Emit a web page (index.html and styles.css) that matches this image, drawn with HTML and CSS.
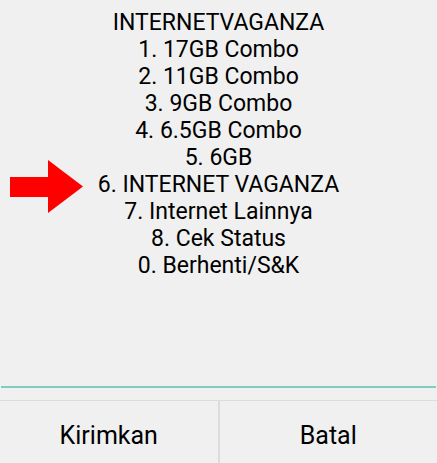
FILE: index.html
```html
<!DOCTYPE html>
<html>
<head>
<meta charset="utf-8">
<link rel="stylesheet" href="styles.css">
</head>
<body>
<div class="dialog">
  <div class="message">
    <div class="line">INTERNETVAGANZA</div>
    <div class="line">1. 17GB Combo</div>
    <div class="line">2. 11GB Combo</div>
    <div class="line">3. 9GB Combo</div>
    <div class="line">4. 6.5GB Combo</div>
    <div class="line">5. 6GB</div>
    <div class="line">6. INTERNET VAGANZA</div>
    <div class="line">7. Internet Lainnya</div>
    <div class="line">8. Cek Status</div>
    <div class="line">0. Berhenti/S&amp;K</div>
    <svg class="arrow" width="74" height="54" viewBox="0 0 74 54"><polygon points="0,17 38,17 38,0 73,26.5 38,53 38,37 0,37" fill="#ff0000"/></svg>
  </div>
  <div class="input-line"></div>
  <div class="buttons">
    <div class="btn">Kirimkan</div>
    <div class="btn">Batal</div>
  </div>
</div>
</body>
</html>
```
FILE: styles.css
```css
html, body {
  margin: 0;
  padding: 0;
  background: #f0f0f0;
}
.dialog {
  width: 437px;
  height: 463px;
  display: flex;
  flex-direction: column;
  font-family: Roboto, "Noto Sans", sans-serif;
  color: #000;
}
.message {
  position: relative;
  flex: 1;
  padding-top: 9px;
  text-align: center;
  font-size: 23px;
  line-height: 27px;
}
.arrow {
  position: absolute;
  left: 10px;
  top: 160px;
}
.input-line {
  height: 2px;
  margin: 0 1px 12px 1px;
  background: #80cbc4;
}
.buttons {
  height: 62px;
  border-top: 1px solid #dcdcdc;
  display: flex;
}
.btn {
  flex: 1;
  display: flex;
  align-items: center;
  justify-content: center;
  font-size: 25px;
  padding-top: 6px;
}
.btn + .btn {
  border-left: 2px solid #dcdcdc;
}
```
